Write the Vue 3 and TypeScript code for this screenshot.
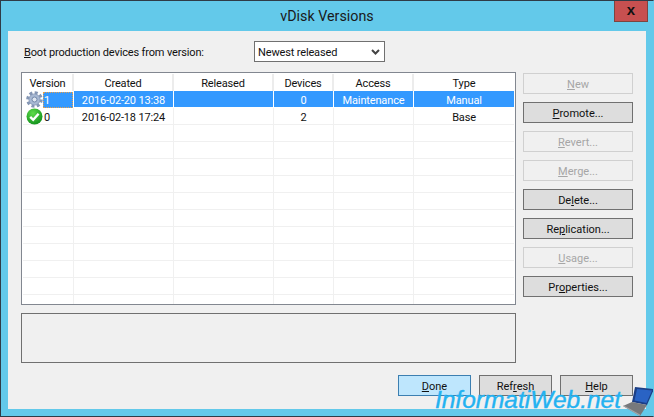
<template>
  <div class="window">
    <div class="titlebar">
      <span class="title">vDisk Versions</span>
      <button class="close">x</button>
    </div>

    <div class="client">
      <div class="top-row">
        <label class="boot-label"><u>B</u>oot production devices from version:</label>
        <div class="combo">
          <span class="combo-text">Newest released</span>
          <svg width="9" height="6" viewBox="0 0 9 6"><path d="M1 1l3.5 3.5L8 1" fill="none" stroke="#444" stroke-width="2" /></svg>
        </div>
      </div>

      <div class="middle">
        <div class="list">
          <div class="row head">
            <div v-for="c in columns" :key="c" class="cell">{{ c }}</div>
          </div>
          <div v-for="(r, i) in rows" :key="i" class="row" :class="{ selected: i === 0 }">
            <div class="cell version">
              <template v-if="r.length">
                <svg v-if="i === 0" class="state" width="17" height="17" viewBox="0 0 17 17">
                  <circle cx="8.500" cy="8.500" r="6.600" fill="none" stroke="#8496b4" stroke-width="3.400" stroke-dasharray="2.900 2.280" />
                  <circle cx="8.500" cy="8.500" r="5.600" fill="#a7b8d3" stroke="#8496b4" stroke-width=".8" />
                  <circle cx="8.500" cy="8.500" r="2.500" fill="#dfe6f1" stroke="#7389aa" />
                </svg>
                <svg v-else class="state" width="17" height="17" viewBox="0 0 17 17">
                  <defs>
                    <radialGradient id="ok" cx=".4" cy=".3" r=".8">
                      <stop offset="0" stop-color="#5fdc4a" />
                      <stop offset="1" stop-color="#0a8a18" />
                    </radialGradient>
                  </defs>
                  <circle cx="8.500" cy="8.500" r="8" fill="url(#ok)" />
                  <path d="M4.200 8.800l3 3 5.400-6" fill="none" stroke="#fff" stroke-width="2.400" />
                </svg>
                <span class="version-text">{{ r[0] }}</span>
              </template>
            </div>
            <div v-for="(v, j) in r.slice(1)" :key="j" class="cell">{{ v }}</div>
            <template v-if="!r.length">
              <div v-for="n in 5" :key="n" class="cell"></div>
            </template>
          </div>
        </div>

        <div class="side">
          <button v-for="b in sideButtons" :key="b.after" class="btn" :disabled="b.off">
            {{ b.before }}<u>{{ b.key }}</u>{{ b.after }}
          </button>
        </div>
      </div>

      <div class="description"></div>

      <div class="bottom">
        <button class="btn default"><u>D</u>one</button>
        <button class="btn">Ref<u>r</u>esh</button>
        <button class="btn"><u>H</u>elp</button>
      </div>
    </div>

    <div class="watermark">
      <span>InformatiWeb.net</span>
      <svg width="32" height="30" viewBox="0 0 32 30">
        <path d="M13 1l19 2-7 16-15-3z" fill="#1c3f86" />
        <path d="M15 3l15 1.600-5.500 12.400-12-2.400z" fill="#2a63c4" />
        <path d="M1 20l9-4 15 3-7 11z" fill="#77797c" />
        <path d="M1 20l17 10v-1.500L2 19.500z" fill="#a4a6a8" />
      </svg>
    </div>
  </div>
</template>

<script setup lang="ts">
interface SideButton {
  before: string;
  key: string;
  after: string;
  off: boolean;
}

const columns = ['Version', 'Created', 'Released', 'Devices', 'Access', 'Type'];

const rows: string[][] = [
  ['1', '2016-02-20 13:38', '', '0', 'Maintenance', 'Manual'],
  ['0', '2016-02-18 17:24', '', '2', '', 'Base'],
  ...Array.from({ length: 11 }, () => [] as string[])
];

const sideButtons: SideButton[] = [
  { before: '', key: 'N', after: 'ew', off: true },
  { before: '', key: 'P', after: 'romote...', off: false },
  { before: '', key: 'R', after: 'evert...', off: true },
  { before: '', key: 'M', after: 'erge...', off: true },
  { before: 'De', key: 'l', after: 'ete...', off: false },
  { before: 'Re', key: 'p', after: 'lication...', off: false },
  { before: '', key: 'U', after: 'sage...', off: true },
  { before: 'Pr', key: 'o', after: 'perties...', off: false }
];
</script>

<style>
html,
body {
  margin: 0;
  overflow: hidden;
}
</style>

<style scoped>
.window {
  position: relative;
  width: 654px;
  height: 417px;
  box-sizing: border-box;
  border: 1px solid #2f3b47;
  border-right-color: #63c9ea;
  background: #63c9ea;
  font-family: Roboto, sans-serif;
  font-size: 11px;
  letter-spacing: -0.15px;
  color: #111;
  overflow: hidden;
}

.titlebar {
  position: relative;
  height: 30px;
  text-align: center;
}

.title {
  font-size: 14.300px;
  line-height: 30px;
  letter-spacing: 0;
  color: #1a1a1a;
}

.close {
  position: absolute;
  top: -1px;
  right: 5px;
  width: 34px;
  height: 22px;
  padding: 0 0 3px;
  border: 1px solid #7d4440;
  border-top: 0;
  background: #c75050;
  color: #111;
  font-family: "Liberation Sans", sans-serif;
  font-size: 15px;
  font-weight: 700;
}

.client {
  width: 638px;
  height: 378px;
  margin-left: 7px;
  padding: 10px 13px 0;
  box-sizing: border-box;
  background: #f0f0f0;
}

.top-row {
  display: flex;
  align-items: center;
  height: 21px;
  padding-left: 3px;
}

.boot-label {
  width: 230px;
  padding-top: 2px;
}

.combo {
  display: flex;
  align-items: center;
  justify-content: space-between;
  width: 131px;
  height: 21px;
  padding: 0 4px 0 3px;
  box-sizing: border-box;
  border: 1px solid #707070;
  background: #fff;
}

.combo-text {
  padding-top: 2px;
}

.middle {
  display: flex;
  gap: 7px;
  margin-top: 10px;
}

.list {
  width: 495px;
  height: 233px;
  padding: 1px;
  box-sizing: border-box;
  border: 1px solid #828790;
  background: #fff;
  overflow: hidden;
}

.row {
  display: grid;
  grid-template-columns: 51px 100px 100px 60px 80px 100px;
  height: 16px;
  border-bottom: 1px solid #f0f0f0;
}

.head {
  height: 17px;
  border-bottom: 0;
}

.cell {
  display: flex;
  align-items: center;
  justify-content: center;
  padding-top: 2px;
  box-sizing: border-box;
  border-right: 1px solid #f0f0f0;
  line-height: 14px;
  white-space: nowrap;
}

.head .cell {
  border-right: 2px solid #ececec;
}

.cell:last-child {
  border-right: 0;
}

.selected {
  background: #3399ff;
  color: #fff;
  border-bottom-color: #fff;
}

.selected .cell {
  border-right-color: #fff;
}

.version {
  justify-content: flex-start;
  padding: 0 0 0 3px;
}

.head .cell:first-child {
  padding-left: 0;
}

.selected .version {
  background: #fff;
}

.state {
  flex: none;
}

.version-text {
  padding: 2px 0 0 1px;
}

.selected .version-text {
  outline: 1px dotted #e8a04c;
  outline-offset: -1px;
  flex: 1;
  height: 16px;
  box-sizing: border-box;
  background: #3399ff;
}

.side {
  display: flex;
  flex-direction: column;
  gap: 8px;
  margin-top: 1px;
}

.btn {
  width: 110px;
  height: 21px;
  padding: 1px 0 0;
  box-sizing: border-box;
  border: 1px solid #707070;
  background: #dddddd;
  color: #111;
  font: inherit;
}

.btn:disabled {
  border-color: #d0d0d0;
  background: #f0f0f0;
  color: #a6a6a6;
}

.description {
  width: 495px;
  height: 50px;
  margin-top: 8px;
  box-sizing: border-box;
  border: 1px solid #707070;
}

.bottom {
  display: flex;
  justify-content: flex-end;
  gap: 8px;
  width: 612px;
  margin-top: 12px;
}

.bottom .btn {
  width: 73px;
}

.bottom .default {
  border-color: #3c7fb1;
  background: #bee6fd;
}

.watermark {
  position: absolute;
  right: -1px;
  bottom: 0;
  display: flex;
  align-items: flex-end;
  gap: 1px;
  color: #24b2f0;
  font-family: "Liberation Sans", sans-serif;
  font-size: 24.500px;
  font-style: italic;
  letter-spacing: 0;
  line-height: 26px;
  -webkit-text-stroke: 0.4px #24b2f0;
}

.watermark span {
  padding-bottom: 3px;
}
</style>
